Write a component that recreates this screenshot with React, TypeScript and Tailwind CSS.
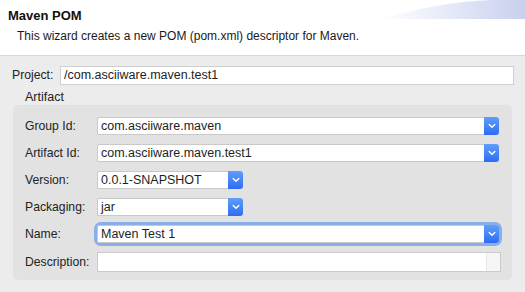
import React from "react";

const Chevron = () => (
  <svg width="8" height="6" viewBox="0 0 8 6" fill="none">
    <path d="M1.2 1.5 L4 4.3 L6.8 1.5" stroke="white" strokeWidth="1.4" strokeLinecap="round" strokeLinejoin="round" />
  </svg>
);

function Combo({ value, width }: { value: string; width: string }) {
  return (
    <div className={`flex h-[18px] ${width}`}>
      <div className="flex flex-1 items-center rounded-l-[2px] border border-[#c9c9c9] border-r-0 bg-white pl-[3px] text-[12.5px] leading-none text-[#1e1e1e]">
        {value}
      </div>
      <div className="flex w-[15px] items-center justify-center rounded-r-[3px] bg-gradient-to-b from-[#5f9ef9] to-[#2d6cf3]">
        <Chevron />
      </div>
    </div>
  );
}

function Row({ label, children }: { label: string; children: React.ReactNode }) {
  return (
    <div className="flex items-center">
      <div className="w-[72px] text-[12.2px] leading-none text-[#222]">{label}</div>
      {children}
    </div>
  );
}

export default function App() {
  return (
    <div
      className="relative h-[292px] w-[525px] overflow-hidden bg-[#ececec]"
      style={{ fontFamily: '"Liberation Sans", Arial, sans-serif' }}
    >
      <div className="relative h-[56px] border-b border-[#d8d8d8] bg-white">
        <svg className="absolute right-0 top-0" width="142" height="20" viewBox="0 0 142 20">
          <defs>
            <linearGradient id="g" x1="0" x2="1" y1="0" y2="0">
              <stop offset="0" stopColor="#ffffff" />
              <stop offset="1" stopColor="#c8d0ee" />
            </linearGradient>
          </defs>
          <path d="M0 18 C 35 9 70 1 110 0 L142 0 L142 19 L0 19 Z" fill="url(#g)" />
        </svg>
        <div className="pl-[8px] pt-[8px] text-[13px] font-bold leading-[15px] text-[#111]">Maven POM</div>
        <div className="pl-[17px] pt-[6px] text-[12px] leading-[14px] text-[#1a1a1a]">
          This wizard creates a new POM (pom.xml) descriptor for Maven.
        </div>
      </div>

      <div className="flex items-center pl-[12px] pt-[10px]">
        <div className="w-[48px] text-[12.2px] leading-none text-[#222]">Project:</div>
        <div className="flex h-[19px] w-[454px] items-center border border-[#cfcfcf] bg-white pl-[3px] text-[12.5px] leading-none text-[#1e1e1e]">
          /com.asciiware.maven.test1
        </div>
      </div>

      <div className="pl-[25px] pt-[5px] text-[12.5px] leading-[14px] text-[#222]">Artifact</div>

      <div className="ml-[13px] mt-[1px] flex w-[499px] flex-col gap-[9px] rounded-[5px] bg-[#e2e2e2] pb-[8px] pl-[12px] pt-[12px]">
        <Row label="Group Id:">
          <Combo value="com.asciiware.maven" width="w-[402px]" />
        </Row>
        <Row label="Artifact Id:">
          <Combo value="com.asciiware.maven.test1" width="w-[402px]" />
        </Row>
        <Row label="Version:">
          <Combo value="0.0.1-SNAPSHOT" width="w-[146px]" />
        </Row>
        <Row label="Packaging:">
          <Combo value="jar" width="w-[146px]" />
        </Row>
        <Row label="Name:">
          <div className="rounded-[4px] shadow-[0_0_0_3px_#8aaee9]">
            <Combo value="Maven Test 1" width="w-[402px]" />
          </div>
        </Row>
        <Row label="Description:">
          <div className="flex h-[20px] w-[404px] border border-[#cbcbcb] bg-white">
            <div className="flex-1" />
            <div className="w-[14px] border-l border-[#e6e6e6] bg-[#f6f6f6]" />
          </div>
        </Row>
      </div>
    </div>
  );
}
